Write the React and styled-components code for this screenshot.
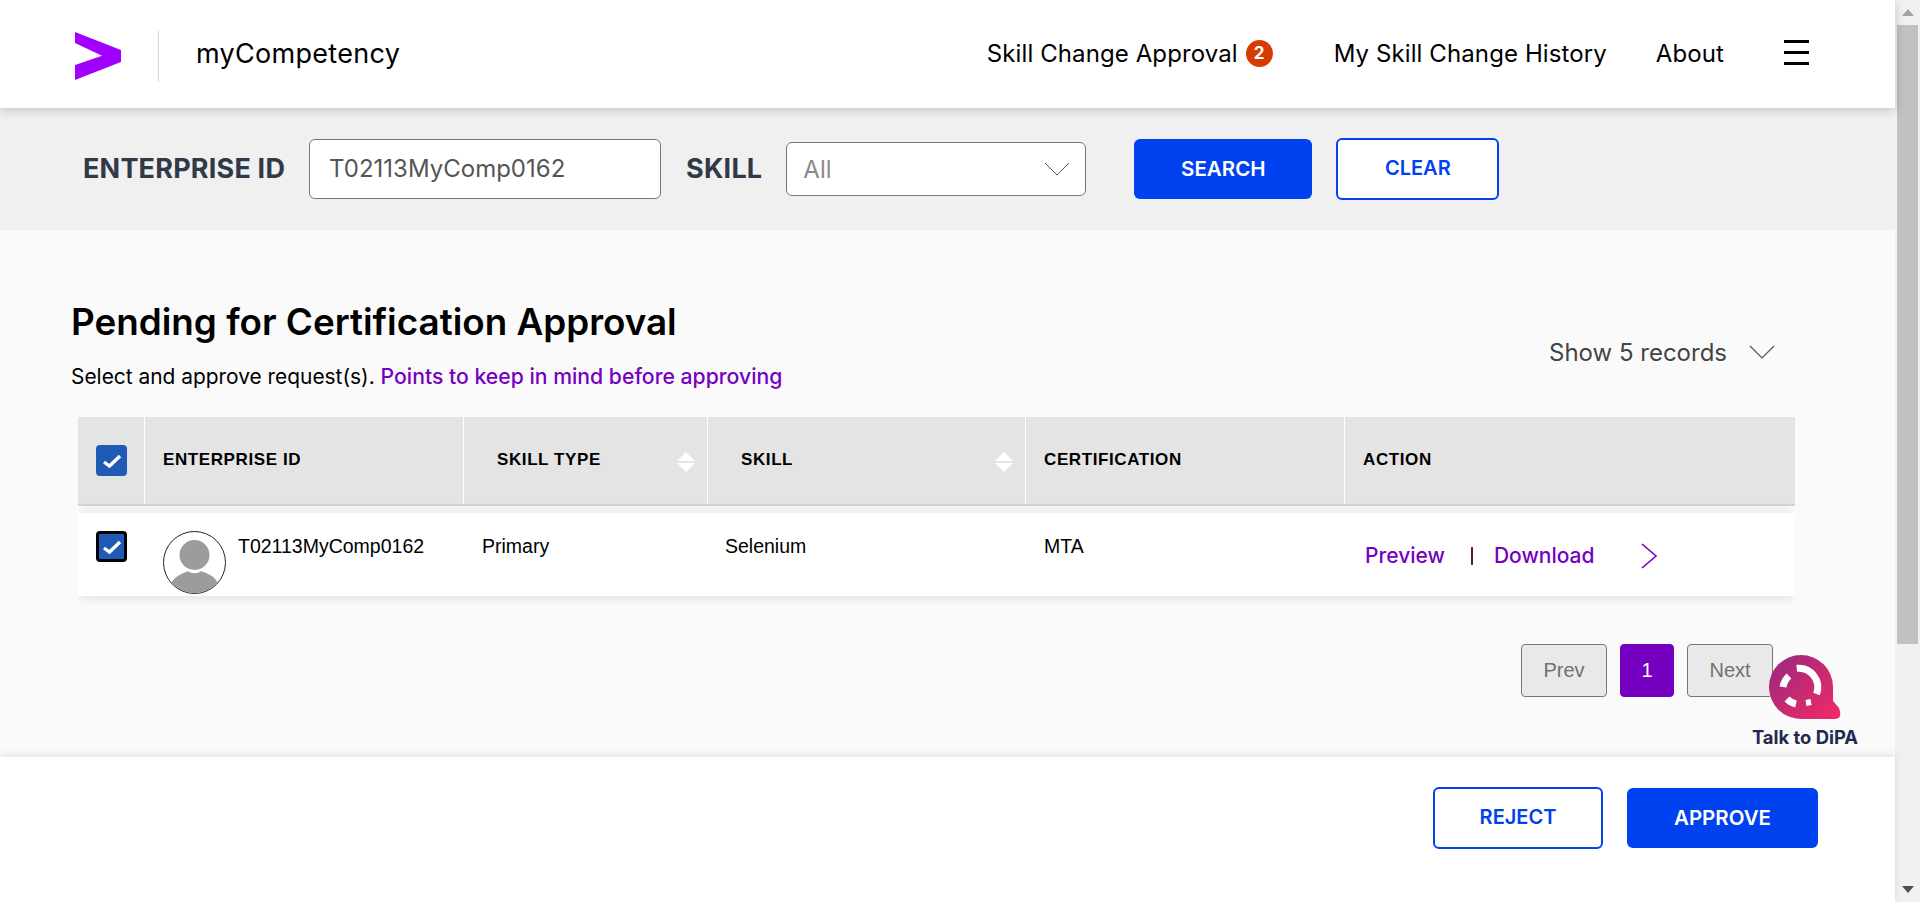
import React from "react";
import styled, { createGlobalStyle } from "styled-components";

const GlobalStyle = createGlobalStyle`
  html, body {
    margin: 0;
    padding: 0;
    height: 100%;
    overflow: hidden;
    font-family: "Inter", "Liberation Sans", sans-serif;
    background: #fff;
  }
  * { box-sizing: border-box; }
`;

const columns = "66px 319px 244px 318px 319px 451px";

const App = () => {
  return (
    <Shell>
      <GlobalStyle />
      <Page>
        <Header>
          <LogoLink>
            <svg width="46" height="48" viewBox="0 0 46 48">
              <polygon points="0,0 46,18 46,30 0,48 0,33 27,23.7 0,11" fill="#a100ff" />
            </svg>
          </LogoLink>
          <AppName>myCompetency</AppName>
          <Nav>
            <NavItem $gap="61px">
              Skill Change Approval
              <Badge>2</Badge>
            </NavItem>
            <NavItem $gap="49px">My Skill Change History</NavItem>
            <NavItem $gap="60px">About</NavItem>
            <Hamburger>
              <span />
              <span />
              <span />
            </Hamburger>
          </Nav>
        </Header>

        <SearchBar>
          <FieldLabel>ENTERPRISE ID</FieldLabel>
          <IdInput>T02113MyComp0162</IdInput>
          <FieldLabel>SKILL</FieldLabel>
          <SkillSelect>
            All
            <svg width="26" height="14" viewBox="0 0 26 14">
              <path d="M1 1 L13 13 L25 1" fill="none" stroke="#555" strokeWidth="1" />
            </svg>
          </SkillSelect>
          <PrimaryButton $w="178px" $h="60px" $ml="48px">SEARCH</PrimaryButton>
          <OutlineButton $w="163px" $h="62px" $ml="24px">CLEAR</OutlineButton>
        </SearchBar>

        <Main>
          <Head>
            <div>
              <Title>Pending for Certification Approval</Title>
              <SubText>
                Select and approve request(s). <PurpleText>Points to keep in mind before approving</PurpleText>
              </SubText>
            </div>
            <ShowRecords>
              Show 5 records
              <svg width="26" height="14" viewBox="0 0 26 14">
                <path d="M1 1 L13 13 L25 1" fill="none" stroke="#555" strokeWidth="1.2" />
              </svg>
            </ShowRecords>
          </Head>

          <TableHead>
            <HeadCell $first>
              <CheckBox />
            </HeadCell>
            <HeadCell>
              <HeadLabel>ENTERPRISE ID</HeadLabel>
            </HeadCell>
            <HeadCell $sortable>
              <HeadLabel>SKILL TYPE</HeadLabel>
              <SortIcon />
            </HeadCell>
            <HeadCell $sortable>
              <HeadLabel>SKILL</HeadLabel>
              <SortIcon />
            </HeadCell>
            <HeadCell>
              <HeadLabel>CERTIFICATION</HeadLabel>
            </HeadCell>
            <HeadCell>
              <HeadLabel>ACTION</HeadLabel>
            </HeadCell>
          </TableHead>

          <TableRow>
            <RowCell $pl="18px">
              <CheckBox $focused />
            </RowCell>
            <RowCell $pl="19px">
              <Avatar />
              <RowText $ml="12px">T02113MyComp0162</RowText>
            </RowCell>
            <RowCell $pl="19px">
              <RowText>Primary</RowText>
            </RowCell>
            <RowCell $pl="18px">
              <RowText>Selenium</RowText>
            </RowCell>
            <RowCell $pl="19px">
              <RowText>MTA</RowText>
            </RowCell>
            <ActionCell>
              <ActionLink>Preview</ActionLink>
              <ActionSep />
              <ActionLink>Download</ActionLink>
              <svg width="18" height="26" viewBox="0 0 18 26">
                <path d="M2 1 L16 13 L2 25" fill="none" stroke="#7500c0" strokeWidth="1.6" />
              </svg>
            </ActionCell>
          </TableRow>

          <Pagination>
            <PageButton>Prev</PageButton>
            <PageButton $active>1</PageButton>
            <PageButton>Next</PageButton>
          </Pagination>

          <Dipa>
            <DipaIcon />
            <DipaLabel>Talk to DiPA</DipaLabel>
          </Dipa>
        </Main>

        <Footer>
          <OutlineButton $w="170px" $h="62px">REJECT</OutlineButton>
          <PrimaryButton $w="191px" $h="60px" $ml="24px">APPROVE</PrimaryButton>
        </Footer>
      </Page>

      <ScrollBar>
        <ScrollArrow />
        <ScrollThumb />
        <ScrollArrow $down />
      </ScrollBar>
    </Shell>
  );
};

export default App;

const CheckBox = ({ $focused }) => (
  <Check $focused={$focused}>
    <svg width="20" height="16" viewBox="0 0 20 16">
      <path d="M2 9 L7.5 13 L18 3" fill="none" stroke="#fff" strokeWidth="3.4" />
    </svg>
  </Check>
);

const SortIcon = () => (
  <SortWrap>
    <svg width="18" height="20" viewBox="0 0 18 20">
      <polygon points="9,0 18,9 0,9" fill="#fff" />
      <polygon points="0,11 18,11 9,20" fill="#fff" />
    </svg>
  </SortWrap>
);

const Avatar = () => (
  <AvatarWrap>
    <svg width="63" height="63" viewBox="0 0 63 63">
      <defs>
        <clipPath id="avatar-clip">
          <circle cx="31.5" cy="31.5" r="30.5" />
        </clipPath>
      </defs>
      <circle cx="31.5" cy="31.5" r="31" fill="#fff" stroke="#222" strokeWidth="1" />
      <g clipPath="url(#avatar-clip)" fill="#9c9c9c">
        <circle cx="31.5" cy="24" r="15" />
        <path d="M8 52 C14 43 22 42 25 40 C28 43 35 43 38 40 C42 42 50 43 55 52 C48 66 15 66 8 52 Z" />
      </g>
    </svg>
  </AvatarWrap>
);

const DipaIcon = () => (
  <svg width="72" height="64" viewBox="0 0 72 64">
    <defs>
      <linearGradient id="dipa-grad" x1="0" y1="0" x2="1" y2="1">
        <stop offset="0" stopColor="#96297f" />
        <stop offset="1" stopColor="#f42a66" />
      </linearGradient>
    </defs>
    <path
      d="M32 0 A32 32 0 0 1 64 32 V46 L70 53 Q74 64 66 64 H32 A32 32 0 0 1 32 0 Z"
      fill="url(#dipa-grad)"
    />
    <g fill="none" stroke="#fff" strokeWidth="7">
      <path d="M27.7 13.3 A19 19 0 0 1 47.5 39" />
      <path d="M14 32 A19 19 0 0 1 20 21" />
      <path d="M18 44 A19 19 0 0 0 27 49" />
      <path d="M37 48 L42 47" strokeWidth="6" />
    </g>
  </svg>
);

const Shell = styled.div`
  display: flex;
  width: 100%;
  height: 902px;
  overflow: hidden;
`;

const Page = styled.div`
  flex: 1;
  min-width: 0;
  display: flex;
  flex-direction: column;
`;

const Header = styled.header`
  position: relative;
  z-index: 2;
  height: 108px;
  flex: none;
  display: flex;
  align-items: center;
  padding: 0 86px 0 75px;
  background: #fff;
  box-shadow: 0 2px 10px rgba(0, 0, 0, 0.2);
`;

const LogoLink = styled.div`
  display: flex;
  align-items: center;
  height: 51px;
  width: 84px;
  margin-top: 4px;
  border-right: 1px solid #d5d5d5;
`;

const AppName = styled.div`
  margin-left: 37px;
  padding-bottom: 2px;
  font-size: 27px;
  letter-spacing: 0.3px;
  color: #000;
`;

const Nav = styled.nav`
  margin-left: auto;
  display: flex;
  align-items: center;
`;

const NavItem = styled.div`
  display: flex;
  align-items: center;
  margin-right: ${(p) => p.$gap};
  padding-bottom: 1px;
  font-size: 24px;
  letter-spacing: 0.1px;
  color: #000;
`;

const Badge = styled.span`
  width: 27px;
  height: 27px;
  margin-left: 8px;
  border-radius: 50%;
  background: #d83b01;
  color: #fff;
  font-size: 17px;
  font-weight: 700;
  letter-spacing: 0;
  text-align: center;
  line-height: 27px;
`;

const Hamburger = styled.div`
  width: 25px;
  height: 25px;
  margin-top: -4px;
  display: flex;
  flex-direction: column;
  justify-content: space-between;
  span {
    display: block;
    height: 3px;
    background: #000;
  }
`;

const SearchBar = styled.div`
  height: 122px;
  flex: none;
  display: flex;
  align-items: center;
  padding-left: 83px;
  background: #f0f0f0;
`;

const FieldLabel = styled.div`
  padding-bottom: 2px;
  font-size: 27px;
  font-weight: 700;
  letter-spacing: 0.2px;
  color: #2f3a48;
`;

const IdInput = styled.div`
  width: 352px;
  height: 60px;
  margin: 0 25px 0 24px;
  padding: 0 0 2px 19px;
  display: flex;
  align-items: center;
  background: #fff;
  border: 1px solid #777;
  border-radius: 6px;
  font-size: 24px;
  color: #555;
`;

const SkillSelect = styled.div`
  width: 300px;
  height: 54px;
  margin-left: 24px;
  padding: 0 15px 0 16px;
  display: flex;
  align-items: center;
  justify-content: space-between;
  background: #fff;
  border: 1px solid #777;
  border-radius: 6px;
  font-size: 24px;
  color: #8a8a8a;
`;

const PrimaryButton = styled.button`
  width: ${(p) => p.$w};
  height: ${(p) => p.$h};
  margin-left: ${(p) => p.$ml || 0};
  padding: 0 0 2px;
  border: none;
  border-radius: 6px;
  background: #0041f0;
  color: #fff;
  font-family: inherit;
  font-size: 20.5px;
  font-weight: 600;
`;

const OutlineButton = styled.button`
  width: ${(p) => p.$w};
  height: ${(p) => p.$h};
  margin-left: ${(p) => p.$ml || 0};
  padding: 0 0 2px;
  border: 2px solid #0041f0;
  border-radius: 6px;
  background: #fff;
  color: #0041f0;
  font-family: inherit;
  font-size: 20px;
  font-weight: 600;
`;

const Main = styled.main`
  position: relative;
  flex: 1;
  min-height: 0;
  padding: 70px 100px 0 71px;
  background: #fafafa;
`;

const Head = styled.div`
  display: flex;
  justify-content: space-between;
  padding-right: 20px;
`;

const Title = styled.h1`
  margin: 0;
  font-size: 36.8px;
  line-height: 44px;
  font-weight: 600;
  color: #000;
`;

const SubText = styled.p`
  margin: 20px 0 0;
  font-size: 20.9px;
  line-height: 24px;
  color: #000;
`;

const PurpleText = styled.span`
  color: #7500c0;
  font-size: 21.2px;
  font-weight: 500;
`;

const ShowRecords = styled.div`
  display: flex;
  align-items: center;
  gap: 22px;
  margin-top: 38px;
  height: 28px;
  font-size: 24px;
  color: #444;
`;

const TableHead = styled.div`
  display: grid;
  grid-template-columns: ${columns};
  height: 89px;
  margin: 28px 0 0 7px;
  background: #e4e4e4;
  border-bottom: 2px solid #d4d4d4;
`;

const HeadCell = styled.div`
  position: relative;
  display: flex;
  align-items: ${(p) => (p.$first ? "center" : "flex-start")};
  padding-left: ${(p) => (p.$first ? "18px" : p.$sortable ? "33px" : "18px")};
  padding-top: ${(p) => (p.$first ? "0" : "33px")};
  border-left: ${(p) => (p.$first ? "none" : "1px solid #fff")};
`;

const HeadLabel = styled.span`
  font-family: "Liberation Sans", Arial, sans-serif;
  font-size: 17px;
  line-height: 20px;
  font-weight: 700;
  letter-spacing: 0.6px;
  color: #000;
`;

const SortWrap = styled.span`
  position: absolute;
  right: 12px;
  top: 35px;
  line-height: 0;
`;

const Check = styled.span`
  width: 31px;
  height: 31px;
  display: flex;
  align-items: center;
  justify-content: center;
  background: #1f5ab5;
  border-radius: 4px;
  border: ${(p) => (p.$focused ? "3px solid #000" : "none")};
`;

const TableRow = styled.div`
  display: grid;
  grid-template-columns: ${columns};
  height: 83px;
  margin: 7px 0 0 7px;
  background: #fff;
  box-shadow: 0 6px 8px -2px rgba(0, 0, 0, 0.08), 0 -6px 8px -2px rgba(0, 0, 0, 0.06);
  clip-path: inset(-10px 0);
`;

const RowCell = styled.div`
  display: flex;
  align-items: flex-start;
  padding-top: 18px;
  padding-left: ${(p) => p.$pl || 0};
`;

const AvatarWrap = styled.span`
  line-height: 0;
  flex: none;
`;

const RowText = styled.span`
  margin-left: ${(p) => p.$ml || 0};
  font-family: "Liberation Sans", Arial, sans-serif;
  font-size: 19.5px;
  line-height: 30px;
  color: #000;
`;

const ActionCell = styled.div`
  display: flex;
  align-items: center;
  padding: 2px 0 0 21px;
  svg {
    margin-left: 45px;
  }
`;

const ActionLink = styled.span`
  font-size: 21px;
  font-weight: 500;
  color: #7500c0;
`;

const ActionSep = styled.span`
  width: 2px;
  height: 18px;
  margin: 0 21px 0 26px;
  background: #5a1a50;
`;

const Pagination = styled.div`
  display: flex;
  justify-content: flex-end;
  gap: 13px;
  margin-top: 48px;
  padding-right: 22px;
`;

const PageButton = styled.div`
  width: ${(p) => (p.$active ? "54px" : "86px")};
  height: 53px;
  display: flex;
  align-items: center;
  justify-content: center;
  font-family: "Liberation Sans", Arial, sans-serif;
  font-size: 20px;
  color: ${(p) => (p.$active ? "#fff" : "#707070")};
  background: ${(p) => (p.$active ? "#7500c0" : "#e9e9e9")};
  border: 1px solid ${(p) => (p.$active ? "#7500c0" : "#777")};
  border-radius: 4px;
`;

const Dipa = styled.div`
  position: absolute;
  right: 37px;
  top: 425px;
  width: 106px;
  display: flex;
  flex-direction: column;
  align-items: center;
`;

const DipaLabel = styled.div`
  margin-top: 7px;
  white-space: nowrap;
  font-size: 18.4px;
  font-weight: 700;
  color: #1f2a50;
`;

const Footer = styled.footer`
  position: relative;
  height: 145px;
  flex: none;
  display: flex;
  align-items: center;
  justify-content: flex-end;
  padding: 0 77px 23px 0;
  background: #fff;
  box-shadow: 0 -2px 8px rgba(0, 0, 0, 0.1);
`;

const ScrollBar = styled.div`
  width: 25px;
  flex: none;
  display: flex;
  flex-direction: column;
  align-items: center;
  background: #f1f1f1;
`;

const ScrollArrow = styled.span`
  width: 0;
  height: 0;
  flex: none;
  margin: ${(p) => (p.$down ? "auto 0 9px" : "9px 0 0")};
  border-left: 6px solid transparent;
  border-right: 6px solid transparent;
  border-top: ${(p) => (p.$down ? "7px solid #505050" : "none")};
  border-bottom: ${(p) => (p.$down ? "none" : "7px solid #a3a3a3")};
`;

const ScrollThumb = styled.div`
  width: 21px;
  height: 619px;
  flex: none;
  margin-top: 9px;
  background: #c1c1c1;
`;
